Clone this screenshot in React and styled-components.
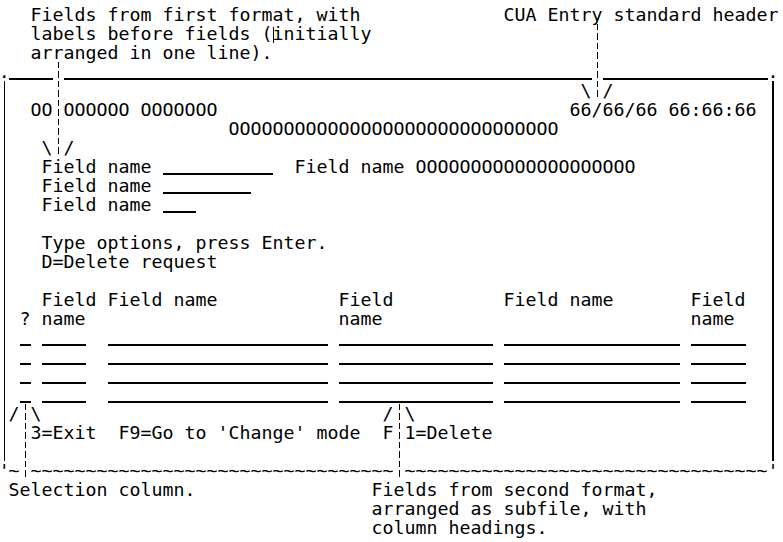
import React from "react";
import styled, { createGlobalStyle, css } from "styled-components";

const CELL = 11;
const LINE = 19;

const GlobalStyle = createGlobalStyle`
  html, body { margin: 0; padding: 0; background: #ffffff; }
  #root { width: 783px; height: 542px; overflow: hidden; }
`;

const place = css`
  grid-column: ${(p) => p.$col + 1} / span ${(p) => p.$span || 1};
  grid-row: ${(p) => p.$row + 1} / span ${(p) => p.$rows || 1};
`;

const Diagram = styled.div`
  display: grid;
  grid-template-columns: 8.5px repeat(70, ${CELL}px);
  grid-template-rows: repeat(28, ${LINE}px);
  padding-top: 4.5px;
  font-family: "DejaVu Sans Mono", "Liberation Mono", monospace;
  font-size: 18.27px;
  line-height: ${LINE}px;
  color: #000;
`;

const Text = styled.span`
  ${place};
  white-space: pre;
`;

const Corner = styled.span`
  ${place};
  justify-self: center;
  white-space: pre;
`;

const Rule = styled.span`
  ${place};
  align-self: start;
  box-sizing: border-box;
  height: 18px;
  border-bottom: 2px solid #000;
`;

const InputField = styled(Rule)``;

const Edge = styled.span`
  ${place};
  justify-self: center;
  width: 1.5px;
  background: #000;
`;

const Pointer = styled.span`
  ${place};
  justify-self: center;
  width: 1px;
  background-image: repeating-linear-gradient(
    to bottom,
    #000 0,
    #000 6.5px,
    transparent 6.5px,
    transparent 9.5px
  );
`;

const Caret = styled.span`
  ${place};
  justify-self: start;
  align-self: start;
  margin-top: 3px;
  width: 1px;
  height: 16px;
  background: #000;
`;

const T = ({ c, r, children }) => (
  <Text $col={c} $row={r} $span={children.length}>
    {children}
  </Text>
);

const Field = ({ c, r, w }) => <InputField $col={c} $row={r} $span={w} />;

const subfileRows = [17, 18, 19, 20];
const subfileFields = [
  [2, 1],
  [4, 4],
  [10, 20],
  [31, 14],
  [46, 16],
  [63, 5],
];

export default function App() {
  return (
    <>
      <GlobalStyle />
      <Diagram>
        {/* annotations above */}
        <T c={3} r={0}>Fields from first format, with</T>
        <T c={46} r={0}>CUA Entry standard header</T>
        <T c={3} r={1}>labels before fields (initially</T>
        <Caret $col={25} $row={1} />
        <T c={3} r={2}>arranged in one line).</T>

        {/* leaders */}
        <Pointer $col={54} $row={1} $rows={4} />
        <Pointer $col={5} $row={3} $rows={5} />
        <Pointer $col={2} $row={21} $rows={4} />
        <Pointer $col={36} $row={21} $rows={4} />

        {/* screen frame */}
        <Corner $col={0} $row={3}>.</Corner>
        <Rule $col={1} $row={3} $span={4} />
        <Rule $col={6} $row={3} $span={48} />
        <Rule $col={55} $row={3} $span={15} />
        <Corner $col={70} $row={3}>.</Corner>
        <Edge $col={0} $row={4} $rows={20} />
        <Edge $col={70} $row={4} $rows={20} />
        <Corner $col={0} $row={24}>'</Corner>
        <T c={1} r={24}>~</T>
        <T c={3} r={24}>{"~".repeat(33)}</T>
        <T c={37} r={24}>{"~".repeat(33)}</T>
        <Corner $col={70} $row={24}>'</Corner>

        {/* header */}
        <T c={53} r={4}>\</T>
        <T c={55} r={4}>/</T>
        <T c={3} r={5}>OO</T>
        <T c={6} r={5}>OOOOOO OOOOOOO</T>
        <T c={52} r={5}>66/66/66 66:66:66</T>
        <T c={21} r={6}>{"O".repeat(30)}</T>

        {/* first format */}
        <T c={4} r={7}>\</T>
        <T c={6} r={7}>/</T>
        <T c={4} r={8}>Field name</T>
        <Field c={15} r={8} w={10} />
        <T c={27} r={8}>{"Field name " + "O".repeat(20)}</T>
        <T c={4} r={9}>Field name</T>
        <Field c={15} r={9} w={8} />
        <T c={4} r={10}>Field name</T>
        <Field c={15} r={10} w={3} />

        <T c={4} r={12}>Type options, press Enter.</T>
        <T c={4} r={13}>D=Delete request</T>

        {/* subfile headings */}
        <T c={4} r={15}>Field</T>
        <T c={10} r={15}>Field name</T>
        <T c={31} r={15}>Field</T>
        <T c={46} r={15}>Field name</T>
        <T c={63} r={15}>Field</T>
        <T c={2} r={16}>?</T>
        <T c={4} r={16}>name</T>
        <T c={31} r={16}>name</T>
        <T c={63} r={16}>name</T>

        {subfileRows.map((r) =>
          subfileFields.map(([c, w]) => (
            <Field key={`${r}-${c}`} c={c} r={r} w={w} />
          ))
        )}

        {/* function keys */}
        <T c={1} r={21}>/</T>
        <T c={3} r={21}>\</T>
        <T c={35} r={21}>/</T>
        <T c={37} r={21}>\</T>
        <T c={3} r={22}>3=Exit  F9=Go to 'Change' mode  F</T>
        <T c={37} r={22}>1=Delete</T>

        {/* annotations below */}
        <T c={1} r={25}>Selection column.</T>
        <T c={34} r={25}>Fields from second format,</T>
        <T c={34} r={26}>arranged as subfile, with</T>
        <T c={34} r={27}>column headings.</T>
      </Diagram>
    </>
  );
}
